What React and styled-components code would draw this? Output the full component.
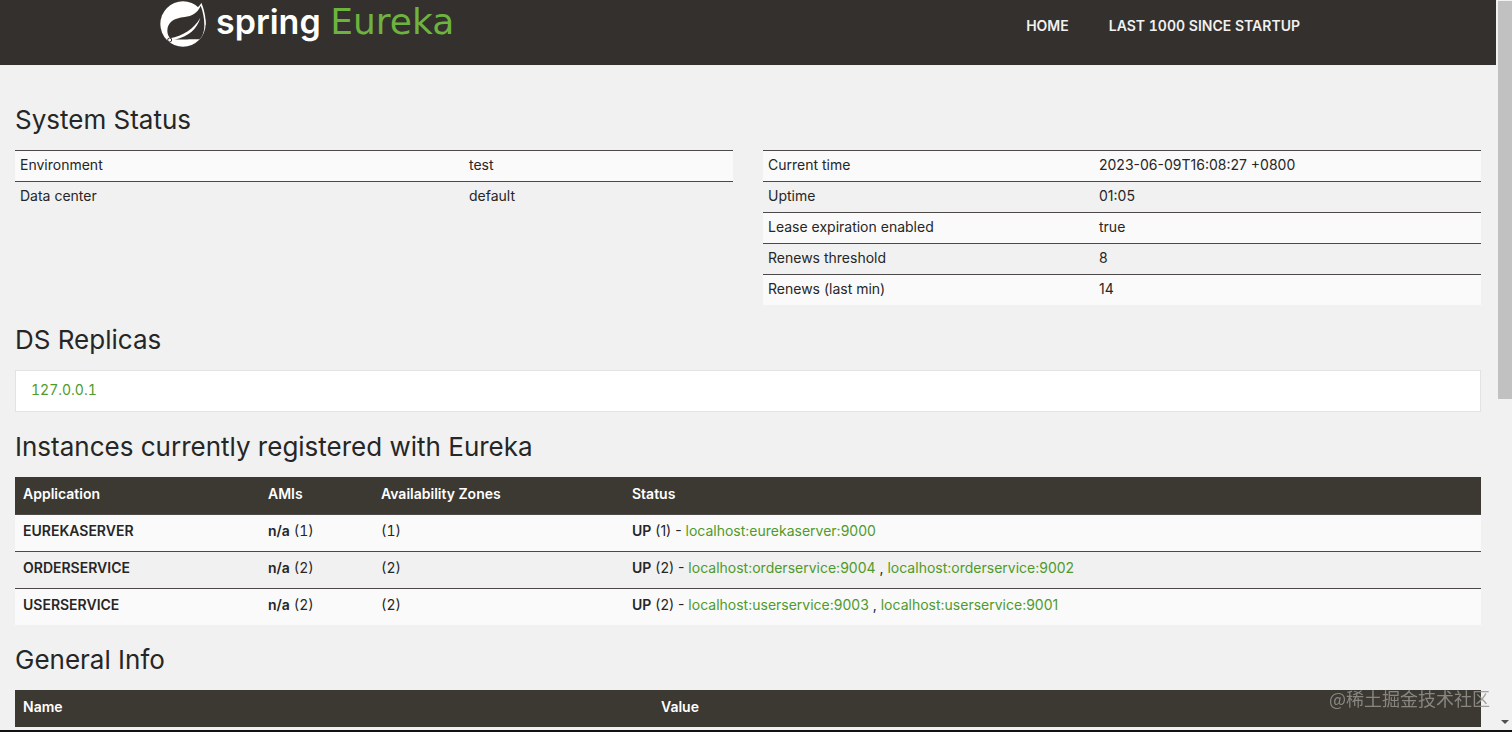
import styled, { createGlobalStyle, ThemeProvider } from "styled-components";

const theme = {
  page: "#f1f1f1",
  header: "#34302d",
  tableHead: "#3c3933",
  line: "#4c4948",
  stripe: "#fafafa",
  text: "#262626",
  link: "#4f9a2a",
  green: "#6db33f",
};

const GlobalStyles = createGlobalStyle`
body {
  margin: 0;
  background-color: #f1f1f1;
  font-family: Inter, "Noto Sans CJK SC", sans-serif;
  font-size: 14px;
  line-height: 20px;
}
`;

const Window = styled.div`
  display: grid;
  grid-template-columns: minmax(0, 1fr) 16px;
  height: 100vh;
  box-sizing: border-box;
  border-bottom: 2px solid #111;
  overflow: hidden;
  background-color: ${(props) => props.theme.page};
  color: ${(props) => props.theme.text};
`;

const Page = styled.div`
  overflow: hidden;
`;

const Header = styled.header`
  background-color: ${(props) => props.theme.header};
`;

const HeaderInner = styled.div`
  display: flex;
  justify-content: space-between;
  align-items: flex-start;
  max-width: 1176px;
  height: 65px;
  margin: 0 auto;
`;

const Brand = styled.a`
  display: flex;
  align-items: flex-start;
  gap: 10px;
  color: white;
  font-size: 34px;
  line-height: 44px;
  text-decoration: none;
`;

const Logo = styled.svg`
  width: 46px;
  height: 46px;
  margin-top: 1px;
`;

const Spring = styled.span`
  font-weight: 600;
`;

const Eureka = styled.span`
  color: ${(props) => props.theme.green};
  font-family: "DejaVu Sans", sans-serif;
  font-size: 36px;
`;

const Nav = styled.nav`
  display: flex;
  gap: 40px;
  padding: 16px 36px 0 0;
`;

const NavLink = styled.a`
  color: #f1f1f1;
  font-weight: 600;
  font-variant-numeric: tabular-nums;
  text-decoration: none;
`;

const Main = styled.main`
  padding: 20px 15px 0;
`;

const Title = styled.h1`
  margin: 19px 0 14px;
  font-size: 26px;
  font-weight: 400;
  line-height: 32px;
`;

const Columns = styled.div`
  display: grid;
  grid-template-columns: 1fr 1fr;
  align-items: start;
  gap: 30px;
`;

const Table = styled.table`
  width: 100%;
  table-layout: fixed;
  border-spacing: 0;
`;

const Cell = styled.td`
  padding: ${(props) => (props.$wide ? "6px 8px 10px" : "4px 5px 6px")};
  border-top: 1px solid ${(props) => props.theme.line};
`;

const CountCell = styled(Cell)`
  font-variant-numeric: tabular-nums;
`;

const HeadCell = styled.th`
  padding: 7px 8px 10px;
  background-color: ${(props) => props.theme.tableHead};
  color: white;
  font-weight: 600;
  text-align: left;
`;

const Row = styled.tr`
  &:nth-child(odd) {
    background-color: ${(props) => props.theme.stripe};
  }
`;

const Strong = styled.b`
  font-weight: 600;
`;

const Link = styled.a`
  color: ${(props) => props.theme.link};
  text-decoration: none;
`;

const Replicas = styled.ul`
  margin: 0;
  padding: 9px 15px 11px;
  border: 1px solid #e3e3e3;
  background-color: white;
  font-variant-numeric: tabular-nums;
  list-style: none;
`;

const ScrollBar = styled.div`
  display: flex;
  flex-direction: column;
  justify-content: space-between;
  align-items: center;
  padding: 1px 0 6px 2px;
`;

const Thumb = styled.div`
  width: 100%;
  height: 55%;
  background-color: #c1c1c1;
`;

const DownArrow = styled.div`
  border: 4px solid transparent;
  border-top-color: #505050;
  border-bottom: 0;
`;

// sits over the page content
const Watermark = styled.div`
  position: fixed;
  right: 22px;
  bottom: 21px;
  color: rgba(150, 148, 145, 0.85);
  font-family: "Noto Sans CJK SC", sans-serif;
  font-size: 18px;
  font-weight: 400;
  line-height: 26px;
`;

const environment = [
  ["Environment", "test"],
  ["Data center", "default"],
];

const status = [
  ["Current time", "2023-06-09T16:08:27 +0800"],
  ["Uptime", "01:05"],
  ["Lease expiration enabled", "true"],
  ["Renews threshold", "8"],
  ["Renews (last min)", "14"],
];

const applications = [
  { name: "EUREKASERVER", instances: ["localhost:eurekaserver:9000"] },
  {
    name: "ORDERSERVICE",
    instances: ["localhost:orderservice:9004", "localhost:orderservice:9002"],
  },
  {
    name: "USERSERVICE",
    instances: ["localhost:userservice:9003", "localhost:userservice:9001"],
  },
];

const Col = styled.col`
  width: ${(props) => props.$width};
`;

const Leaf = () => (
  <Logo viewBox="0 0 138 138" aria-hidden="true">
    <circle cx="69" cy="69" r="68" fill="white" />
    <path d="M106 24 C114 19 120 13 124 5 C131 22 138 45 137 72 L120 60 Z" fill="white" />
    <path
      d="M122 14 C113 36 96 45 74 48 C42 51 22 64 22 89 C22 100 26 108 33 113 C52 118 86 113 118 115 C128 108 133 92 133 72 C133 52 129 32 122 14 Z"
      fill={theme.header}
    />
    <path d="M30 112 C68 104 101 85 121 50 C112 83 86 106 44 116 Z" fill="white" />
    <circle cx="29" cy="117" r="6" fill="white" stroke={theme.header} strokeWidth="3" />
  </Logo>
);

const InfoTable = ({ rows, first }) => (
  <Table>
    <colgroup>
      <Col $width={first} />
      <Col />
    </colgroup>
    <tbody>
      {rows.map(([label, value]) => (
        <Row key={label}>
          <Cell>{label}</Cell>
          <Cell>{value}</Cell>
        </Row>
      ))}
    </tbody>
  </Table>
);

const Instances = () => (
  <Table>
    <colgroup>
      <Col $width="245px" />
      <Col $width="113px" />
      <Col $width="251px" />
      <Col />
    </colgroup>
    <thead>
      <tr>
        <HeadCell>Application</HeadCell>
        <HeadCell>AMIs</HeadCell>
        <HeadCell>Availability Zones</HeadCell>
        <HeadCell>Status</HeadCell>
      </tr>
    </thead>
    <tbody>
      {applications.map(({ name, instances }) => (
        <Row key={name}>
          <Cell $wide>
            <Strong>{name}</Strong>
          </Cell>
          <CountCell $wide>
            <Strong>n/a</Strong> ({instances.length})
          </CountCell>
          <CountCell $wide>({instances.length})</CountCell>
          <Cell $wide>
            <Strong>UP</Strong> ({instances.length}) -{" "}
            {instances.map((id, i) => (
              <span key={id}>
                {i > 0 && " , "}
                <Link href="#">{id}</Link>
              </span>
            ))}
          </Cell>
        </Row>
      ))}
    </tbody>
  </Table>
);

const GeneralInfo = () => (
  <Table>
    <colgroup>
      <Col $width="638px" />
      <Col />
    </colgroup>
    <thead>
      <tr>
        <HeadCell>Name</HeadCell>
        <HeadCell>Value</HeadCell>
      </tr>
    </thead>
  </Table>
);

function App() {
  return (
    <ThemeProvider theme={theme}>
      <GlobalStyles />
      <Window>
        <Page>
          <Header>
            <HeaderInner>
              <Brand href="#">
                <Leaf />
                <span>
                  <Spring>spring</Spring> <Eureka>Eureka</Eureka>
                </span>
              </Brand>
              <Nav>
                <NavLink href="#">HOME</NavLink>
                <NavLink href="#">LAST 1000 SINCE STARTUP</NavLink>
              </Nav>
            </HeaderInner>
          </Header>
          <Main>
            <Title>System Status</Title>
            <Columns>
              <InfoTable rows={environment} first="449px" />
              <InfoTable rows={status} first="331px" />
            </Columns>
            <Title>DS Replicas</Title>
            <Replicas>
              <li>
                <Link href="#">127.0.0.1</Link>
              </li>
            </Replicas>
            <Title>Instances currently registered with Eureka</Title>
            <Instances />
            <Title>General Info</Title>
            <GeneralInfo />
          </Main>
        </Page>
        <ScrollBar>
          <Thumb />
          <DownArrow />
        </ScrollBar>
      </Window>
      <Watermark>@稀土掘金技术社区</Watermark>
    </ThemeProvider>
  );
}

export default App;
